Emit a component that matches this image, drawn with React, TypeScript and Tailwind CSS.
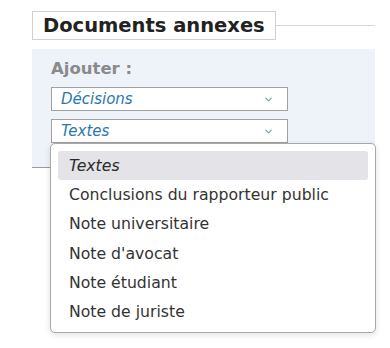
import { ChevronDown } from "lucide-react";

const options = [
  "Conclusions du rapporteur public",
  "Note universitaire",
  "Note d'avocat",
  "Note étudiant",
  "Note de juriste",
];

const Select = ({ label }: { label: string }) => (
  <div className="flex h-[24px] w-[237px] items-center justify-between border border-[#a0a0a0] bg-white pl-[9px] pr-[13px]">
    <span className="text-[15px] italic text-[#2a78ad]">{label}</span>
    <ChevronDown size={11} strokeWidth={2.5} className="text-[#74a0ab]" />
  </div>
);

export default function App() {
  return (
    <div className="relative h-[348px] w-[390px] bg-white font-['DejaVu_Sans',Verdana,sans-serif]">
      <div className="pl-[32px] pr-[15px] pt-[11px]">
        <div className="flex">
          <div className="flex h-[29px] items-center border border-[#d0d0d0] px-[10px]">
            <h2 className="text-[19.5px] font-bold leading-[24px] text-[#222]">Documents annexes</h2>
          </div>
          <div className="flex-1 self-center border-t border-[#d4d4d4]"></div>
        </div>
        <div className="mt-[9px] h-[119px] border-b border-[#9a9a9a] bg-[#eef2f9] pl-[19px] pt-[10px]">
          <div className="text-[16.5px] font-bold leading-[20px] text-[#8a8a8a]">Ajouter :</div>
          <div className="mt-[8px] flex flex-col gap-[8px]">
            <Select label="Décisions" />
            <Select label="Textes" />
          </div>
        </div>
      </div>

      <div className="absolute left-[50px] top-[143px] w-[326px] rounded-[5px] border border-[#a8a8a8] bg-white px-[7px] pb-[5px] pt-[7px] shadow-[0_2px_6px_rgba(0,0,0,0.12)]">
        <div className="flex h-[29px] items-center rounded-[3px] bg-[#e3e3e8] pl-[11px] text-[15.7px] italic text-[#2b2b2b]">
          Textes
        </div>
        {options.map((o) => (
          <div key={o} className="flex h-[29.4px] items-center pl-[11px] text-[15.7px] text-[#333]">
            {o}
          </div>
        ))}
      </div>
    </div>
  );
}
